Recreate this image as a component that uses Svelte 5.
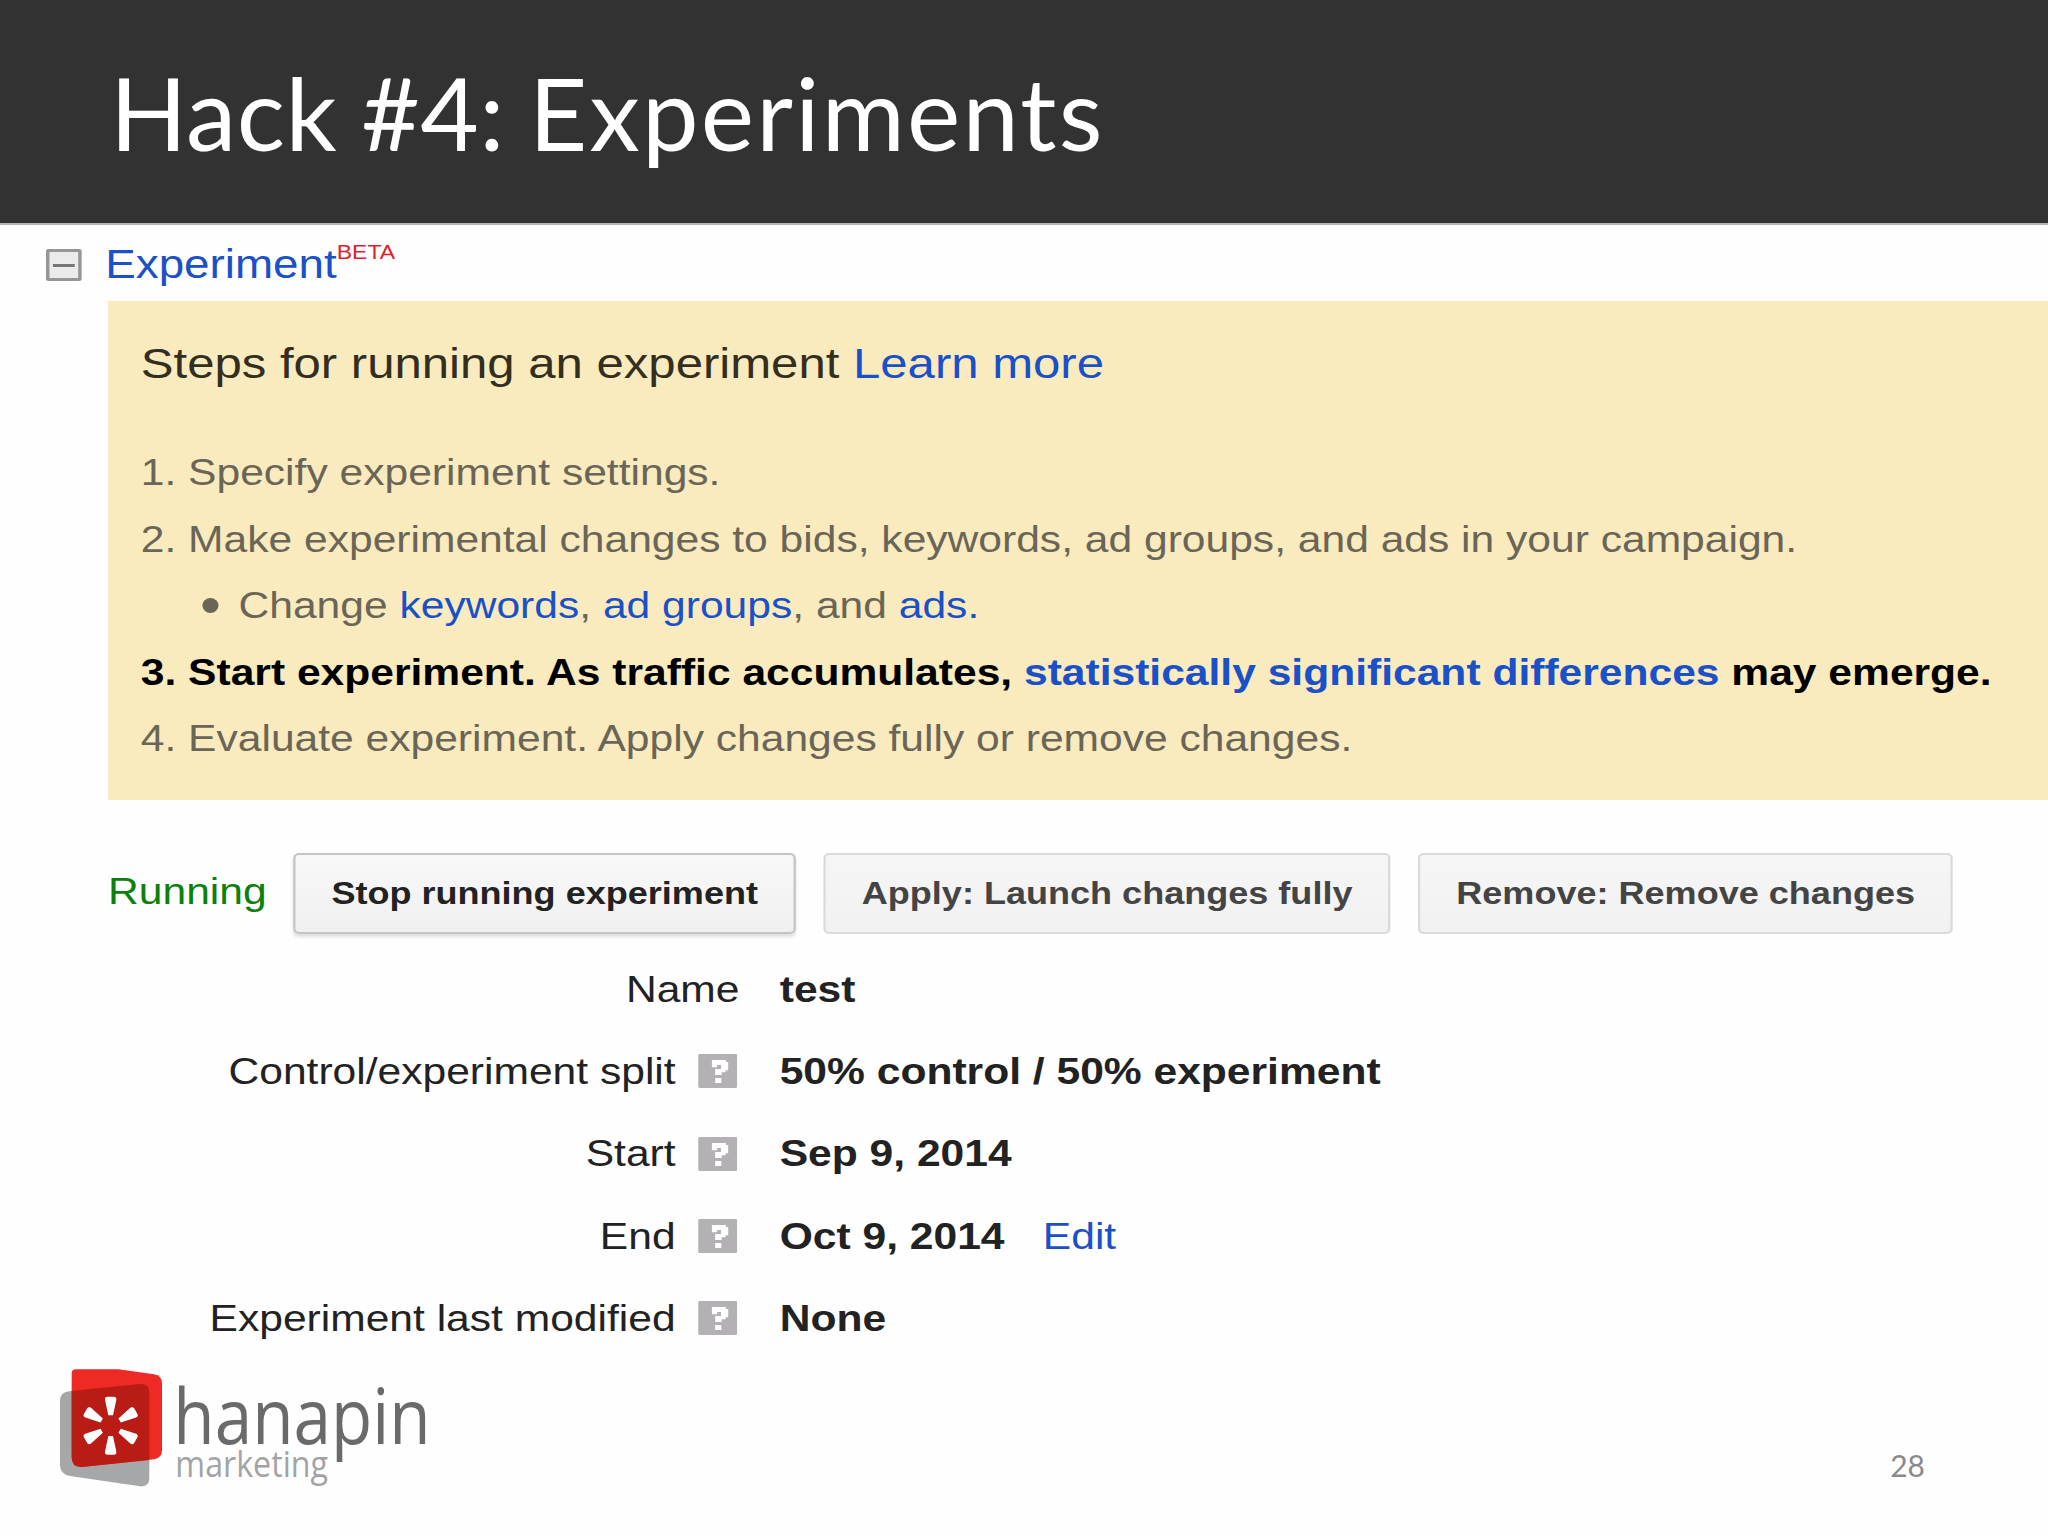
<script lang="ts">
  interface Detail {
    label: string;
    value: string;
    help: boolean;
    editable?: boolean;
  }

  const actions = [
    { label: "Stop running experiment", primary: true },
    { label: "Apply: Launch changes fully", primary: false },
    { label: "Remove: Remove changes", primary: false },
  ];

  const details: Detail[] = [
    { label: "Name", value: "test", help: false },
    { label: "Control/experiment split", value: "50% control / 50% experiment", help: true },
    { label: "Start", value: "Sep 9, 2014", help: true },
    { label: "End", value: "Oct 9, 2014", help: true, editable: true },
    { label: "Experiment last modified", value: "None", help: true },
  ];

  const petals = [0, 60, 120, 180, 240, 300];
</script>

<div class="slide">
  <header class="title-bar">
    <h1>Hack #4: <span>Experiments</span></h1>
  </header>

  <main class="settings">
    <div class="section-head">
      <button type="button" class="collapse" aria-label="Collapse"></button>
      <a class="section-name" href="#experiment">Experiment</a>
      <span class="beta">BETA</span>
    </div>

    <section class="steps">
      <h2>Steps for running an experiment <a href="#learn">Learn more</a></h2>
      <p>1. Specify experiment settings.</p>
      <p>2. Make experimental changes to bids, keywords, ad groups, and ads in your campaign.</p>
      <p class="sub-step">
        <span class="bullet"></span>
        <span>Change <a href="#keywords">keywords</a>, <a href="#groups">ad groups</a>, and <a href="#ads">ads.</a></span>
      </p>
      <p class="current">
        3. Start experiment. As traffic accumulates, <a href="#stats">statistically significant differences</a> may emerge.
      </p>
      <p>4. Evaluate experiment. Apply changes fully or remove changes.</p>
    </section>

    <div class="actions">
      <span class="status">Running</span>
      {#each actions as action (action.label)}
        <button type="button" class="action" class:primary={action.primary}>{action.label}</button>
      {/each}
    </div>

    <div class="details">
      {#each details as detail (detail.label)}
        <div class="detail">
          <span class="label">{detail.label}</span>
          {#if detail.help}
            <svg class="help" viewBox="0 0 12 12" aria-label="Help">
              <rect width="12" height="12" rx="0.5" fill="#b3b1b3" />
              <path d="M4.200 2.100H8.500V2.800H9.200V5.700H8.400V6.400H7.200V7.400H5.200V5.300H7V3.900H5.800V4.700H4.200ZM5.200 8.500H7.100V10.200H5.200Z" fill="#fff" />
            </svg>
          {/if}
          <strong>{detail.value}</strong>
          {#if detail.editable}
            <a class="edit" href="#edit">Edit</a>
          {/if}
        </div>
      {/each}
    </div>
  </main>

  <footer>
    <svg class="logo" viewBox="0 30 1230 420" role="img" aria-label="hanapin marketing">
      <path d="M88 124 L300 102 Q328 100 328 128 V384 Q328 411 300 409 L90 378 Q60 373 60 345 V152 Q60 127 88 124Z" fill="#a5a7a8" />
      <path d="M108 58 H235 L342 73 Q366 77 366 100 V300 Q366 325 342 328 L125 351 Q95 352 95 322 V71 Q95 58 108 58Z" fill="#ee2a24" />
      <path d="M95 123 L300 102 Q328 100 328 128 V330 L125 351 Q95 352 95 322Z" fill="#b81c15" />
      {#each petals as angle (angle)}
        <path d="M205 196 L195 149 Q194 140 203 140 H221 Q230 140 229 149 L219 196Z" fill="#fff" transform="rotate({angle} 212 227)" />
      {/each}
      <text class="brand" x="400" y="281" textLength="772" lengthAdjust="spacingAndGlyphs">hanapin</text>
      <text class="tagline" x="406" y="380" textLength="458" lengthAdjust="spacingAndGlyphs">marketing</text>
    </svg>
    <span class="page-number">28</span>
  </footer>
</div>

<style>
  :global(body) {
    margin: 0;
    background: #fefefe;
  }

  .slide {
    display: flex;
    width: 2048px;
    height: 1536px;
    flex-direction: column;
    overflow: hidden;
    background: #fefefe;
    font-family: "Liberation Sans", Arial, sans-serif;
  }

  .title-bar {
    display: flex;
    box-sizing: border-box;
    height: 225px;
    align-items: center;
    border-bottom: 2px solid #b5b5b5;
    padding: 1px 0 0 110px;
    background: #323232;
  }

  h1 {
    margin: 0;
    color: #fff;
    font-family: Lato, sans-serif;
    font-size: 101px;
    font-weight: 400;
    letter-spacing: 0.5px;
    line-height: 120px;
    white-space: nowrap;
    word-spacing: -2.5px;
  }

  h1 span {
    letter-spacing: 2.2px;
  }

  /* The settings panel is drawn wider than its natural proportions. */
  .settings {
    width: 1780.9px;
    height: 1135px;
    flex: none;
    transform: scaleX(1.15);
    transform-origin: 0 0;
    color: #222;
    font-size: 37.03px;
    white-space: nowrap;
  }

  a {
    color: #1a50c8;
    text-decoration: none;
  }

  .section-head {
    display: flex;
    height: 76px;
    align-items: center;
    padding-left: 40px;
  }

  .collapse {
    display: flex;
    box-sizing: border-box;
    width: 31px;
    height: 32px;
    align-items: center;
    justify-content: center;
    margin: 4px 20.5px 0 0;
    border: 3px solid #969696;
    border-radius: 2px;
    padding: 0;
    background: #ebebeb;
  }

  .collapse::before {
    width: 19px;
    height: 3px;
    background: #777;
    content: "";
  }

  .section-name {
    margin-top: 3px;
    font-size: 39.8px;
  }

  .beta {
    margin-top: -21px;
    color: #e0202c;
    font-size: 20px;
  }

  .steps {
    box-sizing: border-box;
    height: 499px;
    margin-left: 94px;
    padding: 32px 0 0 28.4px;
    background: #f9ebbe;
    color: #6a6557;
  }

  h2 {
    margin: 0 0 46px;
    color: #332e20;
    font-size: 42.7px;
    font-weight: 400;
    line-height: 60px;
  }

  .steps p {
    margin: 0;
    line-height: 66.6px;
  }

  .steps .sub-step {
    display: flex;
    align-items: center;
    gap: 17px;
    padding-left: 54px;
  }

  .bullet {
    width: 14px;
    height: 15px;
    border-radius: 50%;
    background: #6a6557;
  }

  .steps .current {
    color: #000;
    font-weight: 700;
  }

  .actions {
    display: flex;
    height: 81px;
    align-items: center;
    margin: 53px 0 14px 94px;
  }

  .status {
    width: 161px;
    margin-top: -5px;
    color: #0b810b;
  }

  .action {
    box-sizing: border-box;
    height: 81px;
    margin-right: 23.9px;
    border: 2px solid #dadada;
    border-radius: 5px;
    padding: 0 31.2px;
    background: linear-gradient(#f6f6f6, #f1f1f1);
    color: #444;
    font: 700 31.35px "Liberation Sans", Arial, sans-serif;
  }

  .action.primary {
    border-color: #c4c4c4;
    background: linear-gradient(#f8f8f8, #f0f0f0);
    box-shadow: 0 3px 3px rgb(0 0 0 / 12%);
    color: #222;
  }

  .detail {
    display: grid;
    height: 82.3px;
    align-items: center;
    grid-template-columns: 587.5px 53.5px 37px auto 1fr;
  }

  .label {
    grid-column: 1;
    text-align: right;
  }

  .detail:first-child .label {
    grid-column: 1 / 3;
    margin-right: -2px;
  }

  .help {
    width: 34.3px;
    height: 34px;
    grid-column: 2;
    justify-self: end;
  }

  .detail strong {
    grid-column: 4;
  }

  .edit {
    grid-column: 5;
    padding-left: 33.3px;
  }

  footer {
    display: flex;
    height: 176px;
    justify-content: space-between;
    padding: 0 123px 0 40px;
  }

  .logo {
    width: 410px;
    height: 140px;
    overflow: visible;
  }

  .brand,
  .tagline {
    font-family: "Open Sans", sans-serif;
  }

  .brand {
    fill: #6b696b;
    font-size: 232px;
    font-weight: 500;
  }

  .tagline {
    fill: #a3a3a5;
    font-size: 112px;
  }

  .page-number {
    padding-top: 87px;
    color: #8a8a8c;
    font-family: Lato, sans-serif;
    font-size: 30px;
    line-height: 36px;
  }
</style>
